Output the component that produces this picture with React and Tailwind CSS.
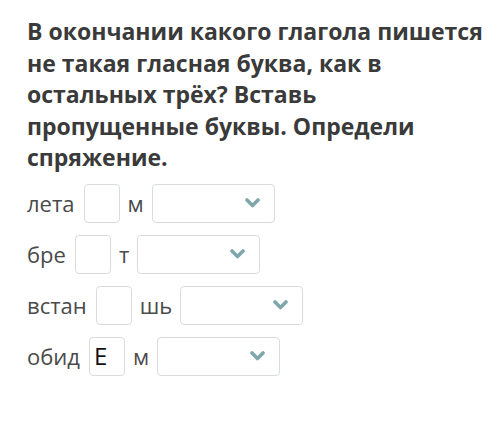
import React from 'react';

const rows = [
  { stem: 'лета', value: '', end: 'м' },
  { stem: 'бре', value: '', end: 'т' },
  { stem: 'встан', value: '', end: 'шь' },
  { stem: 'обид', value: 'Е', end: 'м' },
];

const Chevron = () => (
  <svg width="15" height="10" viewBox="0 0 15 10" fill="none">
    <path d="M2 2 L7.5 7.5 L13 2" stroke="#7fa7ab" strokeWidth="3.6" strokeLinecap="round" strokeLinejoin="round" />
  </svg>
);

const App = () => {
  return (
    <div className="w-[500px] h-[422px] bg-white text-[#3a3a3a]" style={{ fontFamily: '"Open Sans", sans-serif' }}>
      <div className="pl-[27px] pt-[16px]">
        <h1 className="w-[461px] text-[23px] leading-[31.5px] font-bold">
          В окончании какого глагола пишется не такая гласная буква, как в остальных трёх? Вставь пропущенные буквы. Определи спряжение.
        </h1>

        <div className="mt-[10px] flex flex-col gap-[12px]">
          {rows.map((row, i) => (
            <div key={i} className="flex items-center h-[39px] text-[22px] text-[#4a4a4a]">
              <span className="mr-[9px]">{row.stem}</span>
              <div className="w-[36px] h-[39px] border border-[#d9dcdc] rounded-[4px] flex items-center pl-[4px] text-[24px] text-[#111111]">
                {row.value}
              </div>
              <span className="ml-[8px] mr-[8px]">{row.end}</span>
              <div className="w-[123px] h-[39px] border border-[#d9dcdc] rounded-[4px] flex items-center justify-end pr-[14px]">
                <Chevron />
              </div>
            </div>
          ))}
        </div>
      </div>
    </div>
  );
};

export default App;
